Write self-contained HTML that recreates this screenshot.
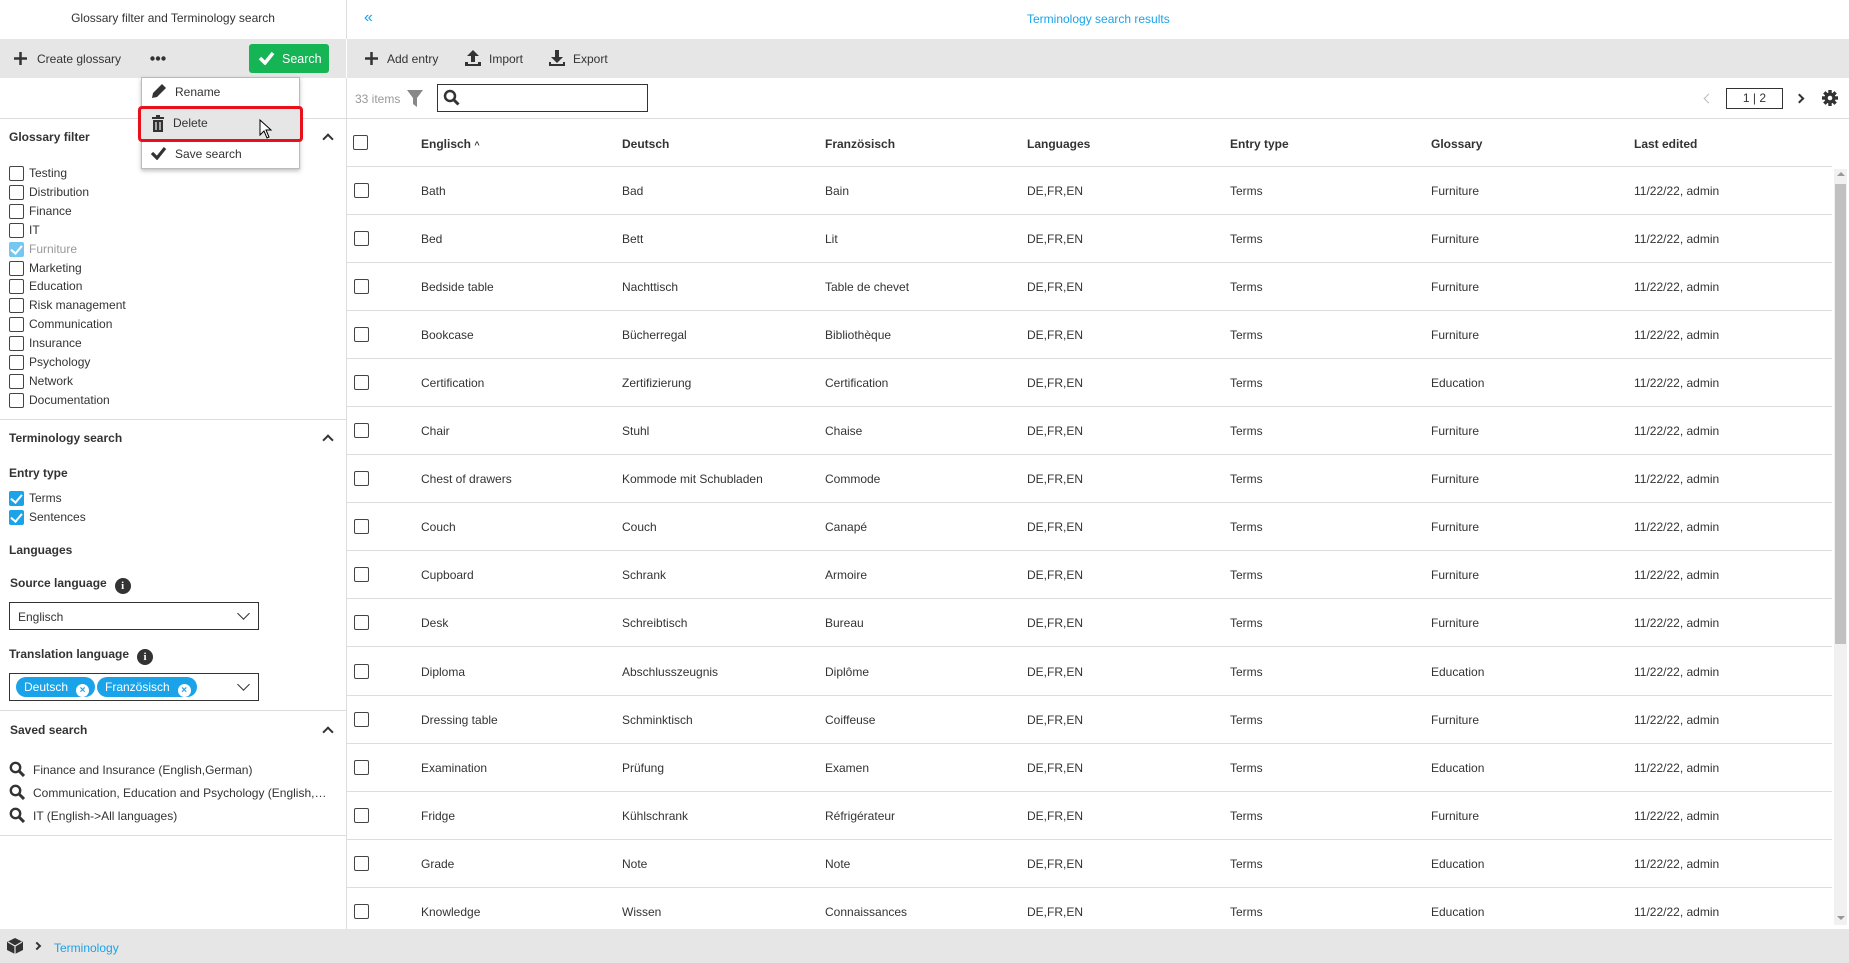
<!DOCTYPE html>
<html><head><meta charset="utf-8"><style>
*{box-sizing:border-box;margin:0;padding:0}
body{width:1849px;height:963px;overflow:hidden;font-family:"Liberation Sans",sans-serif;color:#333;font-size:12px;background:#fff;position:relative}
.a{position:absolute}
.cb{position:absolute;width:15px;height:15px;border:1.5px solid #444;border-radius:2px;background:#fff}
.cbc{position:absolute;width:15px;height:15px;border-radius:2px;background:#1aa3e8}
.cbc:after{content:"";position:absolute;left:4px;top:1px;width:5px;height:9px;border:solid #fff;border-width:0 2.5px 2.5px 0;transform:rotate(40deg)}
.b{font-weight:bold}
.row{position:absolute;left:347px;width:1485px;height:48px;border-bottom:1px solid #ddd}
.row span{position:absolute;top:17px}
.chev{position:absolute;width:8px;height:8px;border-left:2px solid #333;border-top:2px solid #333;transform:rotate(45deg)}
.dn{position:absolute;width:9px;height:9px;border-right:1.5px solid #333;border-bottom:1.5px solid #333;transform:rotate(45deg)}
.tag{position:absolute;top:3px;height:20px;border-radius:10px;background:#1aa3e8;color:#fff;font-size:12px;padding:3px 6px 0 8px;white-space:nowrap}
.x{display:inline-block;width:13px;height:13px;border-radius:7px;background:#fff;color:#1aa3e8;font-size:10px;line-height:13px;text-align:center;font-weight:bold;margin-left:8px;vertical-align:-2px}
.inf{display:inline-block;width:16px;height:16px;border-radius:8px;background:#333;color:#fff;font-size:11px;font-weight:bold;text-align:center;line-height:16px;margin-left:8px;vertical-align:-2px;font-family:"Liberation Serif",serif}
</style></head><body>
<div class="a" style="left:0;top:0;width:346px;height:39px;text-align:center;line-height:37px;font-size:12px">Glossary filter and Terminology search</div>
<div class="a" style="left:346px;top:0;width:1px;height:931px;background:#ddd"></div>
<div class="a" style="left:364px;top:9px;color:#1aa3e8;font-size:16px">«</div>
<div class="a" style="left:1027px;top:12px;color:#1aa3e8;font-size:12px">Terminology search results</div>
<div class="a" style="left:0;top:39px;width:1849px;height:39px;background:#e6e6e6"></div>
<div class="a" style="left:346px;top:39px;width:1px;height:39px;background:#fff"></div>
<svg class="a" style="left:14px;top:52px" width="13" height="13"><path d="M6.5 0 V13 M0 6.5 H13" stroke="#333" stroke-width="2.5"/></svg>
<div class="a" style="left:37px;top:52px">Create glossary</div>
<svg class="a" style="left:150px;top:56px" width="16" height="5"><circle cx="2.5" cy="2.5" r="2.2" fill="#333"/><circle cx="8" cy="2.5" r="2.2" fill="#333"/><circle cx="13.5" cy="2.5" r="2.2" fill="#333"/></svg>
<div class="a" style="left:249px;top:44px;width:80px;height:29px;background:#15b454;border-radius:3px;color:#fff;font-size:12.5px"><svg class="a" style="left:9px;top:7px" width="17" height="14"><path d="M2 7 L7 12 L15 2" stroke="#fff" stroke-width="3.5" fill="none"/></svg><span class="a" style="left:33px;top:8px">Search</span></div>
<svg class="a" style="left:365px;top:52px" width="13" height="13"><path d="M6.5 0 V13 M0 6.5 H13" stroke="#333" stroke-width="2.5"/></svg>
<div class="a" style="left:387px;top:52px">Add entry</div>
<svg class="a" style="left:464px;top:49px" width="18" height="18"><path d="M9 1 L3 7 H7 V13 H11 V7 H15Z M1 13 V17 H17 V13 H14 V15 H4 V13Z" fill="#333"/></svg>
<div class="a" style="left:489px;top:52px">Import</div>
<svg class="a" style="left:548px;top:49px" width="18" height="18"><path d="M7 1 H11 V8 H15 L9 14 L3 8 H7Z M1 13 V17 H17 V13 H15 V15 H3 V13Z" fill="#333"/></svg>
<div class="a" style="left:573px;top:52px">Export</div>
<div class="a" style="left:347px;top:118px;width:1502px;height:1px;background:#ddd"></div>
<div class="a" style="left:0;top:118px;width:346px;height:1px;background:#ddd"></div>
<div class="a" style="left:355px;top:92px;color:#999">33 items</div>
<svg class="a" style="left:407px;top:90px" width="16" height="17"><path d="M0 0 H16 L10 8 V17 L6 14 V8Z" fill="#888"/></svg>
<div class="a" style="left:437px;top:84px;width:211px;height:28px;border:1.5px solid #333"></div>
<svg class="a" style="left:443px;top:89px" width="17" height="17"><circle cx="7" cy="7" r="5" fill="none" stroke="#333" stroke-width="2.5"/><path d="M10.5 10.5 L15.5 15.5" stroke="#333" stroke-width="3"/></svg>
<div class="a" style="left:1705px;top:95px;width:7px;height:7px;border-left:1.5px solid #bbb;border-bottom:1.5px solid #bbb;transform:rotate(45deg)"></div>
<div class="a" style="left:1726px;top:88px;width:57px;height:21px;border:1.5px solid #333;text-align:center;line-height:18px">1 | 2</div>
<div class="a" style="left:1796px;top:95px;width:7px;height:7px;border-right:2px solid #333;border-top:2px solid #333;transform:rotate(45deg)"></div>
<svg class="a" style="left:1822px;top:90px" width="16" height="16" viewBox="0 0 16 16"><g fill="#333"><circle cx="8" cy="8" r="5.5"/><rect x="6.3" y="0" width="3.4" height="16"/><rect x="0" y="6.3" width="16" height="3.4"/><rect x="6.3" y="0" width="3.4" height="16" transform="rotate(45 8 8)"/><rect x="6.3" y="0" width="3.4" height="16" transform="rotate(-45 8 8)"/></g><circle cx="8" cy="8" r="2.3" fill="#fff"/></svg>
<div class="a" style="left:347px;top:166px;width:1485px;height:1px;background:#ddd"></div>
<div class="cb" style="left:353px;top:135px"></div>
<div class="a b" style="left:421px;top:137px">Englisch <span style="font-size:9px">^</span></div>
<div class="a b" style="left:622px;top:137px">Deutsch</div>
<div class="a b" style="left:825px;top:137px">Französisch</div>
<div class="a b" style="left:1027px;top:137px">Languages</div>
<div class="a b" style="left:1230px;top:137px">Entry type</div>
<div class="a b" style="left:1431px;top:137px">Glossary</div>
<div class="a b" style="left:1634px;top:137px">Last edited</div>
<div id="rows"></div>
<div class="a" style="left:1834px;top:169px;width:13px;height:756px;background:#f1f1f1"></div>
<div class="a" style="left:1835px;top:184px;width:11px;height:460px;background:#c1c1c1"></div>
<div class="a" style="left:1837px;top:172px;border:4px solid transparent;border-bottom-color:#999;border-top:0"></div>
<div class="a" style="left:1837px;top:916px;border:4px solid transparent;border-top-color:#999;border-bottom:0"></div>
<div class="a b" style="left:9px;top:130px">Glossary filter</div>
<div class="chev" style="left:324px;top:135px"></div>
<div id="gl"></div>
<div class="a" style="left:0;top:419px;width:346px;height:1px;background:#ddd"></div>
<div class="a b" style="left:9px;top:431px">Terminology search</div>
<div class="chev" style="left:324px;top:436px"></div>
<div class="a b" style="left:9px;top:466px">Entry type</div>
<div class="cbc" style="left:9px;top:491px"></div><div class="a" style="left:29px;top:491px">Terms</div>
<div class="cbc" style="left:9px;top:510px"></div><div class="a" style="left:29px;top:510px">Sentences</div>
<div class="a b" style="left:9px;top:543px">Languages</div>
<div class="a b" style="left:10px;top:576px">Source language<span class="inf">i</span></div>
<div class="a" style="left:9px;top:602px;width:250px;height:28px;border:1.5px solid #333"></div>
<div class="a" style="left:18px;top:610px">Englisch</div>
<div class="dn" style="left:239px;top:609px"></div>
<div class="a b" style="left:9px;top:647px">Translation language<span class="inf">i</span></div>
<div class="a" style="left:9px;top:673px;width:250px;height:28px;border:1.5px solid #333">
<div class="tag" style="left:6px">Deutsch<span class="x">×</span></div>
<div class="tag" style="left:87px">Französisch<span class="x">×</span></div></div>
<div class="dn" style="left:239px;top:680px"></div>
<div class="a" style="left:0;top:710px;width:346px;height:1px;background:#ddd"></div>
<div class="a b" style="left:10px;top:723px">Saved search</div>
<div class="chev" style="left:324px;top:728px"></div>
<div id="ss"></div>
<div class="a" style="left:0;top:835px;width:346px;height:1px;background:#ddd"></div>
<div class="a" style="left:141px;top:77px;width:159px;height:92px;background:#fff;border:1px solid #bbb;box-shadow:0 2px 4px rgba(0,0,0,.25)"></div>
<div class="a" style="left:141px;top:109px;width:159px;height:30px;background:#e6e6e6"></div>
<div class="a" style="left:138px;top:106px;width:165px;height:36px;border:3.5px solid #e8101a;border-radius:4px"></div>
<svg class="a" style="left:151px;top:83px" width="16" height="16"><path d="M11 1 L15 5 L6 14 L1 15 L2 10Z" fill="#333"/></svg>
<div class="a" style="left:175px;top:85px">Rename</div>
<svg class="a" style="left:151px;top:115px" width="14" height="17"><path d="M1 2 H13 V4 H1Z M5 0 H9 V2 H5Z M2 5 H12 V17 H2Z" fill="#333"/><path d="M5 7 V15 M9 7 V15" stroke="#e6e6e6" stroke-width="1.3"/></svg>
<div class="a" style="left:173px;top:116px">Delete</div>
<svg class="a" style="left:259px;top:119px" width="14" height="21"><path d="M1 1 V16 L5 12 L8 19 L10 18 L7 11 H12Z" fill="#fff" stroke="#000" stroke-width="1"/></svg>
<svg class="a" style="left:150px;top:146px" width="17" height="14"><path d="M2 7 L7 12 L15 2" stroke="#333" stroke-width="3.2" fill="none"/></svg>
<div class="a" style="left:175px;top:147px">Save search</div>
<div class="a" style="left:0;top:929px;width:1849px;height:34px;background:#e6e6e6"></div>
<svg class="a" style="left:7px;top:938px" width="16" height="16"><path d="M8 0 L16 4 V12 L8 16 L0 12 V4Z" fill="#333"/><path d="M1 4 L8 8 L15 4 M8 8 V16" stroke="#e6e6e6" stroke-width="1.2" fill="none"/></svg>
<div class="a" style="left:34px;top:943px;width:6px;height:6px;border-right:2px solid #333;border-top:2px solid #333;transform:rotate(45deg)"></div>
<div class="a" style="left:54px;top:941px;color:#1aa3e8">Terminology</div>
<script>
var R=[["Bath","Bad","Bain","Furniture"],["Bed","Bett","Lit","Furniture"],["Bedside table","Nachttisch","Table de chevet","Furniture"],["Bookcase","Bücherregal","Bibliothèque","Furniture"],["Certification","Zertifizierung","Certification","Education"],["Chair","Stuhl","Chaise","Furniture"],["Chest of drawers","Kommode mit Schubladen","Commode","Furniture"],["Couch","Couch","Canapé","Furniture"],["Cupboard","Schrank","Armoire","Furniture"],["Desk","Schreibtisch","Bureau","Furniture"],["Diploma","Abschlusszeugnis","Diplôme","Education"],["Dressing table","Schminktisch","Coiffeuse","Furniture"],["Examination","Prüfung","Examen","Education"],["Fridge","Kühlschrank","Réfrigérateur","Furniture"],["Grade","Note","Note","Education"],["Knowledge","Wissen","Connaissances","Education"]];
var h="";R.forEach(function(r,i){var t=167+i*48.05;h+='<div class="row" style="top:'+t+'px"><div class="cb" style="left:7px;top:16px"></div><span style="left:74px">'+r[0]+'</span><span style="left:275px">'+r[1]+'</span><span style="left:478px">'+r[2]+'</span><span style="left:680px">DE,FR,EN</span><span style="left:883px">Terms</span><span style="left:1084px">'+r[3]+'</span><span style="left:1287px">11/22/22, admin</span></div>';});
document.getElementById("rows").innerHTML=h;
var G=["Testing","Distribution","Finance","IT","Furniture","Marketing","Education","Risk management","Communication","Insurance","Psychology","Network","Documentation"];
h="";G.forEach(function(g,i){var t=166+i*18.9;h+=(g=="Furniture"?'<div class="cbc" style="left:9px;top:'+t+'px;opacity:.6"></div><div class="a" style="left:29px;top:'+t+'px;color:#999">':'<div class="cb" style="left:9px;top:'+t+'px"></div><div class="a" style="left:29px;top:'+t+'px">')+g+'</div>';});
document.getElementById("gl").innerHTML=h;
var S=["Finance and Insurance (English,German)","Communication, Education and Psychology (English,…","IT (English-&gt;All languages)"];
h="";S.forEach(function(s,i){var t=763+i*23;h+='<svg class="a" style="left:9px;top:'+(t-2)+'px" width="16" height="16"><circle cx="6.5" cy="6.5" r="4.7" fill="none" stroke="#333" stroke-width="2.4"/><path d="M10 10 L15 15" stroke="#333" stroke-width="3"/></svg><div class="a" style="left:33px;top:'+t+'px">'+s+'</div>';});
document.getElementById("ss").innerHTML=h;
</script>
</body></html>
